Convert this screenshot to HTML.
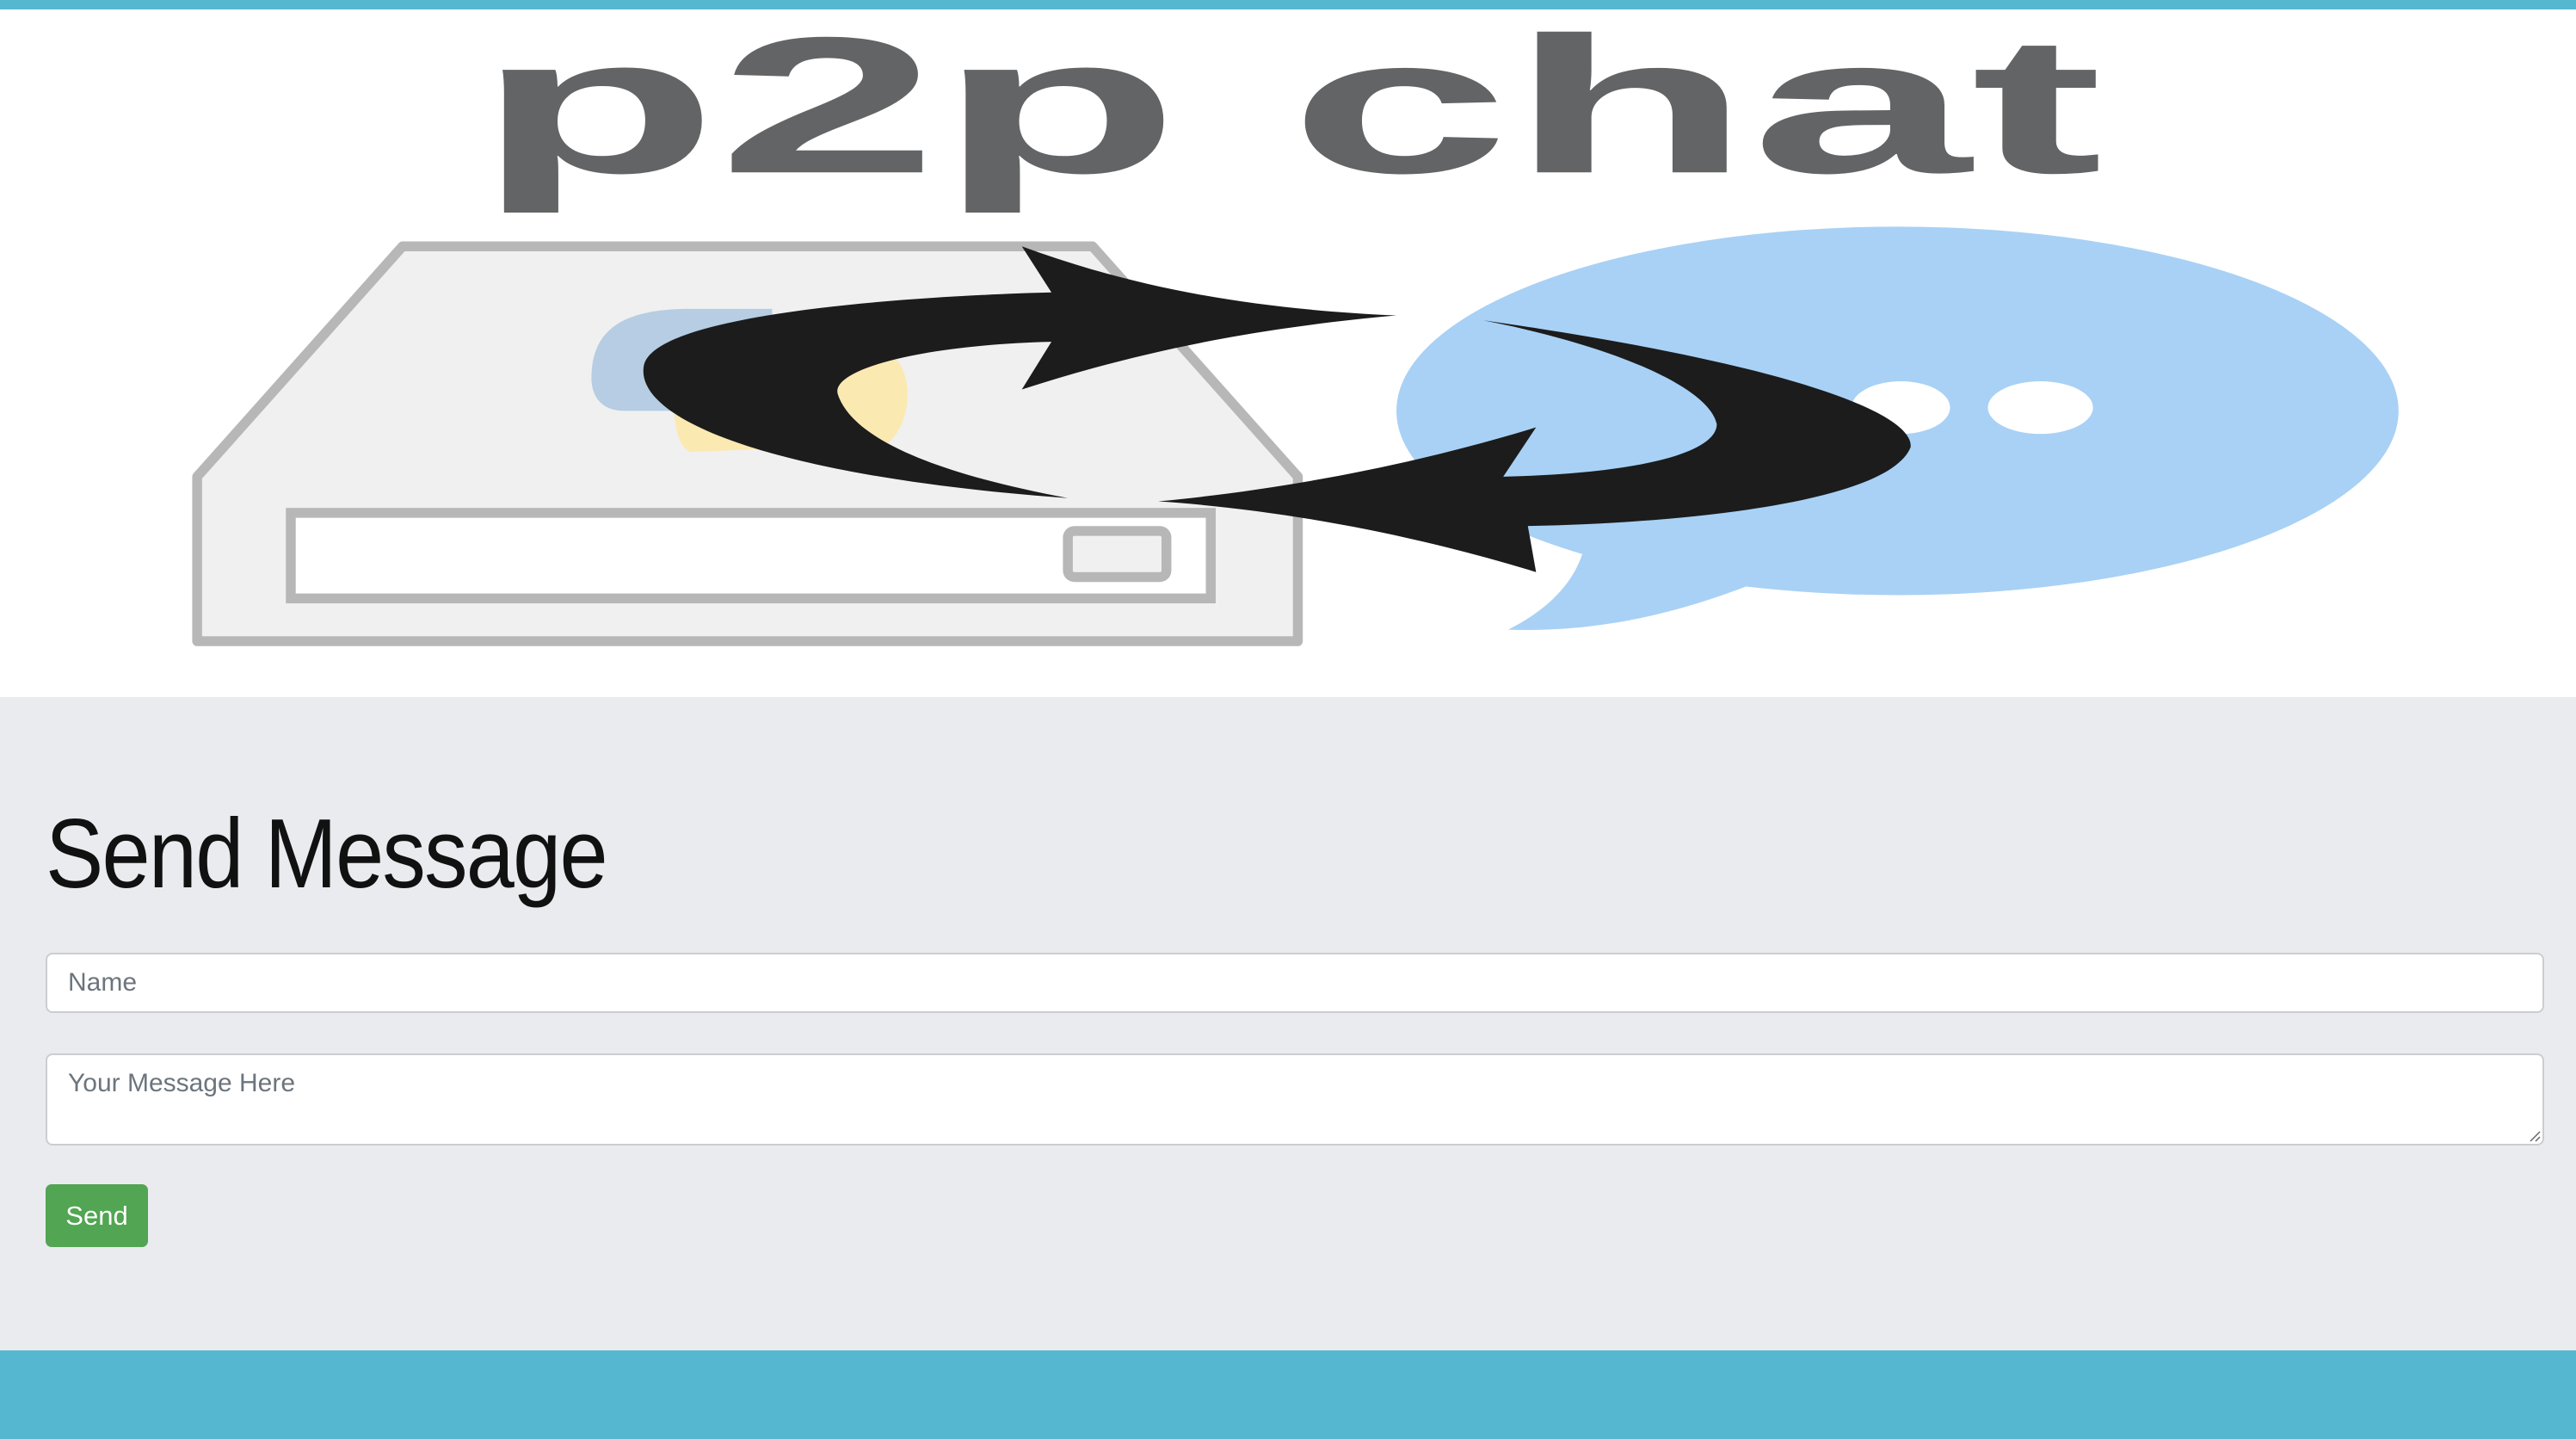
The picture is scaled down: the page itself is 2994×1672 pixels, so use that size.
<!DOCTYPE html>
<html><head><meta charset="utf-8"><style>
html,body{margin:0;padding:0;width:2994px;height:1672px;overflow:hidden;background:#e9ebef;font-family:"Liberation Sans",sans-serif}
.top{position:absolute;left:0;top:0;width:2994px;height:11px;background:#56b8d0}
.hero{position:absolute;left:0;top:11px;width:2994px;height:799px;background:#fff}
.foot{position:absolute;left:0;top:1569px;width:2994px;height:103px;background:#56b8d0}
h1{position:absolute;left:53px;top:928px;margin:0;font-weight:normal;font-size:114px;line-height:130px;color:#111;letter-spacing:-2px;transform:scaleX(0.885);transform-origin:0 0;white-space:nowrap}
.inp{position:absolute;left:53px;width:2904px;background:#fff;border:2px solid #cbcdd1;border-radius:8px;box-sizing:border-box;color:#6c757d;font-size:30px;padding-left:24px}
.btn{position:absolute;left:53px;top:1376px;width:119px;height:73px;background:#52a552;border-radius:7px;color:#fff;font-size:31px;line-height:73px;text-align:center}
</style></head><body>
<div class="top"></div>
<div class="hero">
<svg width="2994" height="799" viewBox="0 6 1568 418" preserveAspectRatio="none">
<text x="290" y="105" font-family="Liberation Sans" font-weight="bold" font-size="118" fill="#636466" textLength="990" lengthAdjust="spacingAndGlyphs">p2p chat</text>
<path d="M120,290 L245,150 L665,150 L790,290 L790,390 L120,390 Z" fill="#f0f0f0" stroke="#b7b7b7" stroke-width="6" stroke-linejoin="round"/>
<rect x="177" y="312" width="560" height="52" fill="#fff" stroke="#b7b7b7" stroke-width="6"/>
<rect x="650" y="323" width="60" height="28" rx="4" fill="#f0f0f0" stroke="#b7b7b7" stroke-width="6"/>
<path d="M360,230 C360,200 380,188 420,188 L470,188 L470,250 L380,250 C365,250 360,240 360,230 Z" fill="#b6cde3"/>
<path d="M410,235 L540,215 C555,220 558,255 540,270 L420,275 C410,270 410,250 410,235 Z" fill="#fbe9b2"/>
<ellipse cx="1155" cy="250" rx="305" ry="112" fill="#a8d1f5"/>
<path d="M965,330 C960,355 940,372 918,383 C980,385 1030,370 1075,352 Z" fill="#a8d1f5"/>
<ellipse cx="1157" cy="248" rx="30" ry="16" fill="#fff"/>
<ellipse cx="1242" cy="248" rx="32" ry="16" fill="#fff"/>
<path d="M650,303 C470,290 385,255 392,222 C400,190 560,180 640,178 L622,150 C690,175 760,188 850,192 C760,200 690,215 622,237 L640,208 C560,210 505,225 510,240 C520,270 580,290 650,303 Z" fill="#1c1c1c"/>
<path d="M903,195 C1080,220 1165,250 1163,272 C1150,305 1030,318 930,320 L935,348 C860,325 780,310 705,305 C780,298 860,283 935,260 L915,290 C1000,288 1045,275 1045,258 C1040,235 980,210 903,195 Z" fill="#1c1c1c"/>
</svg>
</div>
<h1>Send Message</h1>
<div class="inp" style="top:1107px;height:70px;line-height:66px">Name</div>
<div class="inp" style="top:1224px;height:107px;line-height:30px;padding-top:18px">Your Message Here
<svg style="position:absolute;right:2px;bottom:2px" width="14" height="14"><path d="M2,13 L13,2 M8,13 L13,8" stroke="#666" stroke-width="1.5"/></svg></div>
<div class="btn">Send</div>
<div class="foot"></div>
</body></html>
